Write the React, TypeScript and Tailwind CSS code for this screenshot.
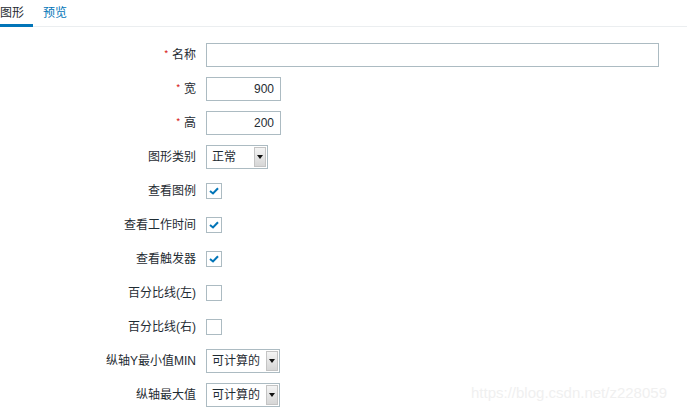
import { ReactNode } from 'react'

const font = { fontFamily: '"Liberation Sans", Arial, "Noto Sans CJK SC", sans-serif' }

function Label({ children, required }: { children: ReactNode; required?: boolean }) {
  return (
    <div className="w-[196px] shrink-0 text-right pr-0">
      {required && <span className="text-[#d40000] text-[9px] relative -top-[3px] mr-[4px]">*</span>}
      {children}
    </div>
  )
}

function Row({ children }: { children: ReactNode }) {
  return <div className="flex items-center h-[34px] gap-[10px]">{children}</div>
}

function Checkbox({ checked }: { checked?: boolean }) {
  return (
    <div className="w-[16px] h-[16px] border border-[#acbbc2] bg-white flex items-center justify-center">
      {checked && (
        <svg width="10" height="8" viewBox="0 0 10 8">
          <path d="M1 4 L4 6.5 L9 1.2" fill="none" stroke="#0275b8" strokeWidth="2" />
        </svg>
      )}
    </div>
  )
}

function Select({ value, width }: { value: string; width: string }) {
  return (
    <div className={`${width} h-[24px] border border-[#acbbc2] bg-white flex items-stretch`}>
      <div className="flex-1 flex items-center pl-[5px] text-[#1f2c33]">{value}</div>
      <div className="w-[12px] my-[1px] mr-[1px] border border-[#c4c4c4] bg-gradient-to-b from-[#f4f4f4] to-[#d6d6d6] flex items-center justify-center">
        <svg width="6" height="4" viewBox="0 0 6 4">
          <path d="M0 0 H6 L3 4 Z" fill="#111" />
        </svg>
      </div>
    </div>
  )
}

function TextInput({ value, width }: { value?: string; width: string }) {
  return (
    <div className={`${width} h-[24px] border border-[#acbbc2] bg-white flex items-center justify-end pr-[6px] text-[#1f2c33]`}>
      {value}
    </div>
  )
}

export default function App() {
  return (
    <div className="relative w-[687px] h-[413px] bg-white overflow-hidden text-[12px] text-[#1f2c33]" style={font}>
      {/* Tabs */}
      <div className="flex h-[27px] border-b border-[#ebeef0]">
        <div className="pr-[9px] pt-[4px] border-b-[3px] border-[#0275b8] text-[#1f2c33] -mb-[1px]">图形</div>
        <div className="pl-[10px] pt-[4px] text-[#0275b8]">预览</div>
      </div>

      {/* Form */}
      <div className="mt-[11px]">
        <Row>
          <Label required>名称</Label>
          <TextInput width="w-[453px]" />
        </Row>
        <Row>
          <Label required>宽</Label>
          <TextInput width="w-[75px]" value="900" />
        </Row>
        <Row>
          <Label required>高</Label>
          <TextInput width="w-[75px]" value="200" />
        </Row>
        <Row>
          <Label>图形类别</Label>
          <Select width="w-[62px]" value="正常" />
        </Row>
        <Row>
          <Label>查看图例</Label>
          <Checkbox checked />
        </Row>
        <Row>
          <Label>查看工作时间</Label>
          <Checkbox checked />
        </Row>
        <Row>
          <Label>查看触发器</Label>
          <Checkbox checked />
        </Row>
        <Row>
          <Label>百分比线(左)</Label>
          <Checkbox />
        </Row>
        <Row>
          <Label>百分比线(右)</Label>
          <Checkbox />
        </Row>
        <Row>
          <Label>纵轴Y最小值MIN</Label>
          <Select width="w-[74px]" value="可计算的" />
        </Row>
        <Row>
          <Label>纵轴最大值</Label>
          <Select width="w-[74px]" value="可计算的" />
        </Row>
      </div>

      {/* watermark */}
      <div className="absolute left-[471px] top-[382px] text-[15px] text-[#f0f0f0]">
        https://blog.csdn.net/z228059
      </div>
    </div>
  )
}
